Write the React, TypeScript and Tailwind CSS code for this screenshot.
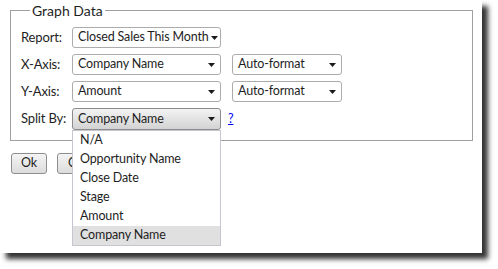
import React from "react";

const Arrow = () => (
  <svg width="7" height="4" viewBox="0 0 7 4" className="shrink-0">
    <polygon points="0,0 7,0 3.5,4" fill="#1a1a1a" />
  </svg>
);

function Select({
  value,
  width,
  active,
}: {
  value: string;
  width: string;
  active?: boolean;
}) {
  return (
    <div
      className={
        "flex items-center justify-between gap-[2px] rounded-[3px] border pl-[5px] pr-[5px] " +
        width +
        (active
          ? " border-[#8c8c8c] bg-gradient-to-b from-[#f3f3f3] to-[#d3d3d3] h-[22px]"
          : " border-[#acacac] bg-white h-[21px]")
      }
    >
      <span className="whitespace-nowrap leading-none">{value}</span>
      <Arrow />
    </div>
  );
}

const items = ["N/A", "Opportunity Name", "Close Date", "Stage", "Amount", "Company Name"];

export default function App() {
  return (
    <div
      className="w-[498px] h-[269px] bg-white text-[12.5px] tracking-[-0.15px] text-[#1e1e1e]"
      style={{ fontFamily: 'Lato, "Noto Sans", sans-serif' }}
    >
      <div className="w-[482px] h-[253px] bg-white shadow-[6px_6px_5px_rgba(0,0,0,0.8)] pl-[10px] pt-[2px]">
        <fieldset className="w-[463px] border border-[#a0a0a0] pl-[10px] pb-[10px]">
          <legend className="ml-[9px] px-[2px] text-[14px] tracking-normal leading-[17px]">Graph Data</legend>
          <div className="flex flex-col gap-[6px] pt-[8px]">
            <div className="flex items-center">
              <span className="w-[51px] text-[13px]">Report:</span>
              <Select value="Closed Sales This Month" width="w-[149px]" />
            </div>
            <div className="flex items-center">
              <span className="w-[51px] text-[13px]">X-Axis:</span>
              <Select value="Company Name" width="w-[149px]" />
              <div className="w-[11px]" />
              <Select value="Auto-format" width="w-[110px]" />
            </div>
            <div className="flex items-center">
              <span className="w-[51px] text-[13px]">Y-Axis:</span>
              <Select value="Amount" width="w-[149px]" />
              <div className="w-[11px]" />
              <Select value="Auto-format" width="w-[110px]" />
            </div>
            <div className="flex items-center">
              <span className="w-[51px] text-[13px]">Split By:</span>
              <div className="relative">
                <Select value="Company Name" width="w-[149px]" active />
                <div className="absolute left-0 top-full z-10 w-[149px] border border-[#c6c6d0] bg-white">
                  {items.map((it, i) => (
                    <div
                      key={it}
                      className={
                        "h-[19px] flex items-center pl-[7px] whitespace-nowrap " +
                        (i === items.length - 1 ? "bg-[#e0e0e0]" : "")
                      }
                    >
                      {it}
                    </div>
                  ))}
                </div>
              </div>
              <a className="ml-[7px] text-[#0000ee] underline" href="#">
                ?
              </a>
            </div>
          </div>
        </fieldset>
        <div className="flex gap-[10px] mt-[12px] ml-[1px]">
          <button className="h-[21px] w-[36px] rounded-[3px] border border-[#8e8e8e] bg-gradient-to-b from-[#f4f4f4] to-[#dcdcdc] leading-none">
            Ok
          </button>
          <button className="h-[21px] px-[10px] rounded-[3px] border border-[#8e8e8e] bg-gradient-to-b from-[#f4f4f4] to-[#dcdcdc] leading-none">
            Cancel
          </button>
        </div>
      </div>
    </div>
  );
}
